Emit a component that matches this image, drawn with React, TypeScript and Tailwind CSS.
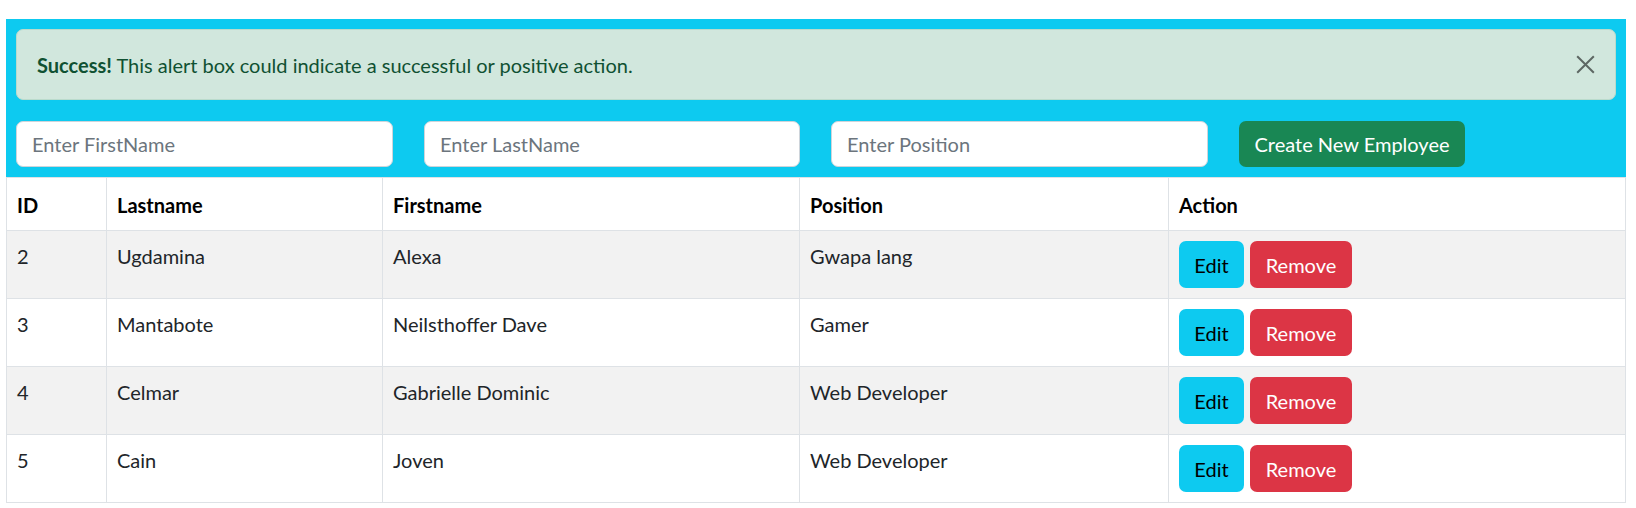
import { useState } from "react";

interface Employee {
  id: number;
  lastname: string;
  firstname: string;
  position: string;
}

const initialEmployees: Employee[] = [
  { id: 2, lastname: "Ugdamina", firstname: "Alexa", position: "Gwapa lang" },
  { id: 3, lastname: "Mantabote", firstname: "Neilsthoffer Dave", position: "Gamer" },
  { id: 4, lastname: "Celmar", firstname: "Gabrielle Dominic", position: "Web Developer" },
  { id: 5, lastname: "Cain", firstname: "Joven", position: "Web Developer" },
];

const App = () => {
  const [employees] = useState<Employee[]>(initialEmployees);
  const [showAlert, setShowAlert] = useState(true);

  return (
    <div className="bg-white min-h-screen pt-[19px] pl-[6px] pr-[10px] font-['Lato',sans-serif] text-[20px] text-[#212529]">
      {/* Form area */}
      <div className="bg-[#0dcaf0] p-[10px]">
        {showAlert && (
          <div className="relative mb-[21px] h-[71px] flex items-center rounded-[7px] border border-[#badbcc] bg-[#d1e7dd] pl-[20px] pr-[60px] text-[#0f5132]">
            <p>
              <strong className="font-bold">Success!</strong> This alert box could indicate a successful or positive action.
            </p>
            <button
              className="absolute right-[20px] top-1/2 -translate-y-1/2 w-[20px] h-[20px] flex items-center justify-center opacity-55"
              onClick={() => setShowAlert(false)}
            >
              <svg width="19" height="19" viewBox="0 0 16 16" fill="none" stroke="#000" strokeWidth="1.7">
                <path d="M1 1l14 14M15 1L1 15" />
              </svg>
            </button>
          </div>
        )}

        <div className="flex items-center">
          <input
            className="w-[377px] h-[46px] rounded-[7px] border border-[#ced4da] bg-white px-[15px] outline-none placeholder:text-[#6c757d]"
            placeholder="Enter FirstName"
          />
          <input
            className="ml-[31px] w-[376px] h-[46px] rounded-[7px] border border-[#ced4da] bg-white px-[15px] outline-none placeholder:text-[#6c757d]"
            placeholder="Enter LastName"
          />
          <input
            className="ml-[31px] w-[377px] h-[46px] rounded-[7px] border border-[#ced4da] bg-white px-[15px] outline-none placeholder:text-[#6c757d]"
            placeholder="Enter Position"
          />
          <button className="ml-[31px] w-[226px] h-[46px] rounded-[7px] bg-[#198754] text-white">
            Create New Employee
          </button>
        </div>
      </div>

      {/* Employee table */}
      <table className="w-full border-collapse table-fixed">
        <colgroup>
          <col className="w-[100px]" />
          <col className="w-[276px]" />
          <col className="w-[417px]" />
          <col className="w-[369px]" />
          <col />
        </colgroup>
        <thead>
          <tr>
            <th className="border border-[#dee2e6] px-[10px] pt-[12px] pb-[10px] text-left align-top font-bold text-black leading-[30px]">ID</th>
            <th className="border border-[#dee2e6] px-[10px] pt-[12px] pb-[10px] text-left align-top font-bold text-black leading-[30px]">Lastname</th>
            <th className="border border-[#dee2e6] px-[10px] pt-[12px] pb-[10px] text-left align-top font-bold text-black leading-[30px]">Firstname</th>
            <th className="border border-[#dee2e6] px-[10px] pt-[12px] pb-[10px] text-left align-top font-bold text-black leading-[30px]">Position</th>
            <th className="border border-[#dee2e6] px-[10px] pt-[12px] pb-[10px] text-left align-top font-bold text-black leading-[30px]">Action</th>
          </tr>
        </thead>
        <tbody>
          {employees.map((emp, index) => (
            <tr key={emp.id} className={index % 2 === 0 ? "bg-[#f2f2f2]" : "bg-white"}>
              <td className="border border-[#dee2e6] px-[10px] py-[10px] align-top leading-[30px]">{emp.id}</td>
              <td className="border border-[#dee2e6] px-[10px] py-[10px] align-top leading-[30px]">{emp.lastname}</td>
              <td className="border border-[#dee2e6] px-[10px] py-[10px] align-top leading-[30px]">{emp.firstname}</td>
              <td className="border border-[#dee2e6] px-[10px] py-[10px] align-top leading-[30px]">{emp.position}</td>
              <td className="border border-[#dee2e6] px-[10px] py-[10px] align-top">
                <div className="flex gap-[6px]">
                  <button className="w-[65px] h-[47px] rounded-[7px] bg-[#0dcaf0] text-black">Edit</button>
                  <button className="w-[102px] h-[47px] rounded-[7px] bg-[#dc3545] text-white">Remove</button>
                </div>
              </td>
            </tr>
          ))}
        </tbody>
      </table>
    </div>
  );
};

export default App;
